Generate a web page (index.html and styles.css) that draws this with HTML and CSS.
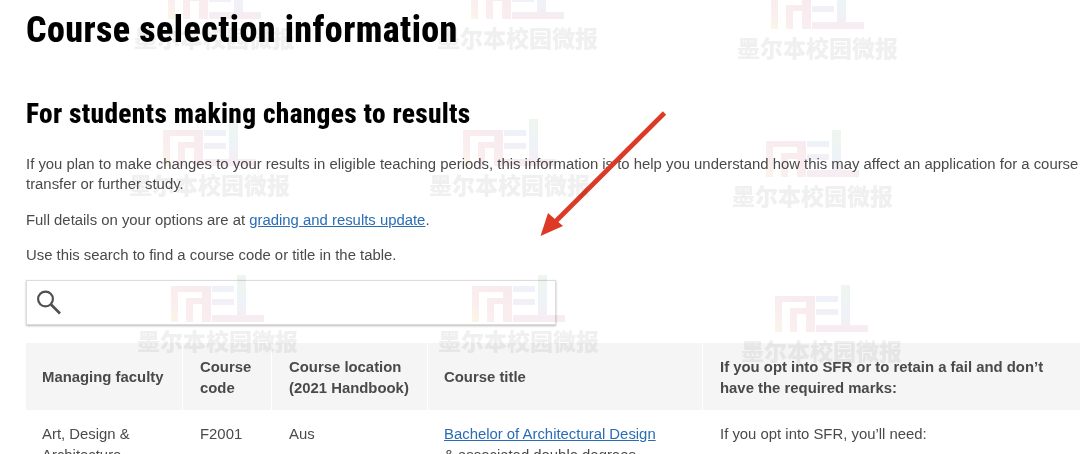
FILE: index.html
```html
<!DOCTYPE html>
<html lang="en">
<head>
<meta charset="utf-8">
<title>Course selection information</title>
<link rel="stylesheet" href="styles.css">
</head>
<body>
<main class="page">
  <h1 class="title">Course selection information</h1>
  <h2 class="subtitle">For students making changes to results</h2>
  <p class="para para-first">If you plan to make changes to your results in eligible teaching periods, this information is to help you understand how this may affect an application for a course transfer or further study.</p>
  <p class="para">Full details on your options are at <a class="link" href="#">grading and results update</a>.</p>
  <p class="para">Use this search to find a course code or title in the table.</p>
  <div class="search">
    <svg class="search-icon" width="26" height="26" viewBox="0 0 26 26" aria-hidden="true">
      <circle cx="8.5" cy="9" r="7.4" fill="none" stroke="#505050" stroke-width="2.2"/>
      <path d="M14 14.5 L23 23.5" fill="none" stroke="#505050" stroke-width="2.6"/>
    </svg>
  </div>
  <table class="courses">
    <thead>
      <tr>
        <th class="col-faculty">Managing faculty</th>
        <th class="col-code">Course code</th>
        <th class="col-loc">Course location (2021 Handbook)</th>
        <th class="col-title">Course title</th>
        <th class="col-req">If you opt into SFR or to retain a fail and don’t have the required marks:</th>
      </tr>
    </thead>
    <tbody>
      <tr>
        <td>Art, Design &amp; Architecture</td>
        <td>F2001</td>
        <td>Aus</td>
        <td class="cell-title"><a class="link" href="#">Bachelor of Architectural Design</a><br>&amp; associated double degrees</td>
        <td>If you opt into SFR, you’ll need:</td>
      </tr>
    </tbody>
  </table>
</main>

<svg class="arrow" width="1080" height="454" viewBox="0 0 1080 454" aria-hidden="true">
  <path d="M664.5 113 L553 224" fill="none" stroke="#dd3a26" stroke-width="4.6"/>
  <path d="M540.5 236 L548 213 L556 220 L563 226 Z" fill="#dd3a26"/>
</svg>

<div class="wm wm-a1"><svg class="wm-logo" viewBox="0 0 93 47"><use href="#mel"/></svg><span class="wm-text">墨尔本校园微报</span></div>
<div class="wm wm-a2"><svg class="wm-logo" viewBox="0 0 93 47"><use href="#mel"/></svg><span class="wm-text">墨尔本校园微报</span></div>
<div class="wm wm-a3"><svg class="wm-logo" viewBox="0 0 93 47"><use href="#mel"/></svg><span class="wm-text">墨尔本校园微报</span></div>
<div class="wm wm-b1"><svg class="wm-logo" viewBox="0 0 93 47"><use href="#mel"/></svg><span class="wm-text">墨尔本校园微报</span></div>
<div class="wm wm-b2"><svg class="wm-logo" viewBox="0 0 93 47"><use href="#mel"/></svg><span class="wm-text">墨尔本校园微报</span></div>
<div class="wm wm-b3"><svg class="wm-logo" viewBox="0 0 93 47"><use href="#mel"/></svg><span class="wm-text">墨尔本校园微报</span></div>
<div class="wm wm-c1"><svg class="wm-logo" viewBox="0 0 93 47"><use href="#mel"/></svg><span class="wm-text">墨尔本校园微报</span></div>
<div class="wm wm-c2"><svg class="wm-logo" viewBox="0 0 93 47"><use href="#mel"/></svg><span class="wm-text">墨尔本校园微报</span></div>
<div class="wm wm-c3"><svg class="wm-logo" viewBox="0 0 93 47"><use href="#mel"/></svg><span class="wm-text">墨尔本校园微报</span></div>

<svg class="defs" width="0" height="0" aria-hidden="true">
  <defs>
    <linearGradient id="melm" x1="0" y1="1" x2="1" y2="0">
      <stop offset="0" stop-color="#f9f1d8"/>
      <stop offset="0.3" stop-color="#f7e3e4"/>
      <stop offset="1" stop-color="#f3dde6"/>
    </linearGradient>
    <linearGradient id="mele" x1="0" y1="0" x2="0" y2="1">
      <stop offset="0" stop-color="#e2ebf5"/>
      <stop offset="1" stop-color="#ebe6f1"/>
    </linearGradient>
    <linearGradient id="mell" x1="0" y1="0" x2="0" y2="1">
      <stop offset="0" stop-color="#e3f0e3"/>
      <stop offset="0.6" stop-color="#e2ebf4"/>
      <stop offset="1" stop-color="#f4dfe8"/>
    </linearGradient>
    <g id="mel">
      <path fill="url(#melm)" d="M0 11 H40 V47 H31 V29 H22 V47 H15 V23 H31 V17 H7 V47 H0 Z"/>
      <path fill="url(#mele)" d="M41 11 H63 V17 H41 Z M41 24 H63 V30 H41 Z"/>
      <path fill="url(#mell)" d="M66 0 H75 V40 H93 V47 H41 V40 H66 Z"/>
    </g>
  </defs>
</svg>
</body>
</html>
```

FILE: styles.css
```css
html, body {
  margin: 0;
  padding: 0;
  background: #fff;
  width: 1080px;
  height: 454px;
  overflow: hidden;
}

body {
  position: relative;
  font-family: "Liberation Sans", Arial, sans-serif;
  color: #4a4a4a;
}

.page {
  box-sizing: border-box;
  height: 454px;
  overflow: hidden;
  padding: 7.5px 0 0 26px;
  width: 1080px;
  filter: blur(0.3px);
}

.title, .subtitle {
  font-family: "Roboto Condensed", "Roboto", sans-serif;
  font-stretch: 80%;
  font-weight: 800;
  color: #000;
  margin: 0;
}

.title {
  font-size: 36px;
  line-height: 44px;
  letter-spacing: 0.43px;
}

.subtitle {
  font-size: 27.4px;
  line-height: 34px;
  letter-spacing: 0.3px;
  margin-top: 45.5px;
}

.para {
  font-size: 14.88px;
  line-height: 20px;
  margin: 15.5px 0 0;
  width: 1054px;
}

.para-first {
  margin-top: 23px;
}

.link {
  color: #2a6db5;
  text-decoration: underline;
}

.search {
  box-sizing: border-box;
  width: 530px;
  height: 45px;
  margin-top: 15px;
  background: #fff;
  border: 1px solid #dcdcdc;
  box-shadow: 0 1px 2px rgba(0, 0, 0, 0.28);
  display: flex;
  align-items: center;
  padding-left: 10px;
}

.search-icon {
  display: block;
}

.courses {
  border-collapse: separate;
  border-spacing: 0;
  table-layout: fixed;
  width: 1054px;
  margin-top: 18px;
  font-size: 14.88px;
  line-height: 20.5px;
}

.courses th,
.courses td {
  box-sizing: border-box;
  padding: 14px 12px 12px 17px;
}

.courses th {
  background: #f5f5f5;
  color: #4a4a4a;
  font-weight: 700;
  text-align: left;
  vertical-align: middle;
  border-left: 1px solid #fff;
}

.courses th:first-child {
  border-left: 0;
  padding-left: 16px;
}

.courses td {
  vertical-align: top;
  border-left: 1px solid transparent;
}

.courses td:first-child {
  border-left: 0;
  padding-left: 16px;
}

.courses .col-title,
.courses .cell-title {
  padding-left: 16px;
}

.col-faculty { width: 156px; }
.col-code { width: 89px; }
.col-loc { width: 156px; }
.col-title { width: 275px; }
.col-req { width: 378px; }

.arrow {
  position: absolute;
  left: 0;
  top: 0;
  pointer-events: none;
}

.defs {
  position: absolute;
}

.wm {
  position: absolute;
  width: 162px;
  height: 78px;
  mix-blend-mode: multiply;
  pointer-events: none;
  filter: blur(0.7px);
}

.wm-logo {
  position: absolute;
  left: 34px;
  top: 0;
  width: 93px;
  height: 47px;
  opacity: 0.6;
}

.wm-text {
  position: absolute;
  left: 0;
  top: 53px;
  width: 162px;
  font-family: "Noto Sans CJK SC", sans-serif;
  font-size: 23px;
  line-height: 24px;
  font-weight: 900;
  color: #f0f0f0;
  white-space: nowrap;
}

.wm-a1 { left: 134px; top: -28px; }
.wm-a2 { left: 437px; top: -28px; }
.wm-a3 { left: 737px; top: -18px; }
.wm-b1 { left: 129px; top: 119px; }
.wm-b2 { left: 429px; top: 119px; }
.wm-b3 { left: 732px; top: 130px; }
.wm-c1 { left: 137px; top: 275px; }
.wm-c2 { left: 438px; top: 275px; }
.wm-c3 { left: 741px; top: 285px; }
```
